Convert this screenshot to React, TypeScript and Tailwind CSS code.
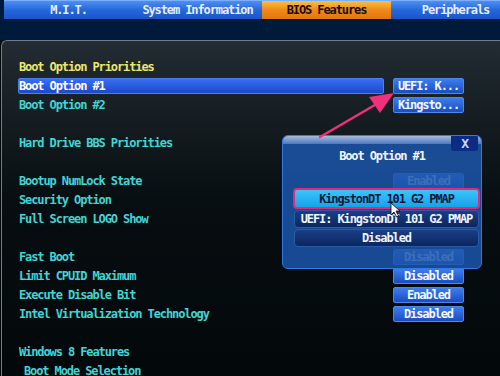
import React from "react";

type Row = {
  label?: string;
  value?: string;
  header?: boolean;
  selected?: boolean;
  indent?: boolean;
};

const rows: Row[] = [
  { label: "Boot Option Priorities", header: true },
  { label: "Boot Option #1", value: "UEFI: K...", selected: true },
  { label: "Boot Option #2", value: "Kingsto..." },
  {},
  { label: "Hard Drive BBS Priorities" },
  {},
  { label: "Bootup NumLock State", value: "Enabled" },
  { label: "Security Option" },
  { label: "Full Screen LOGO Show" },
  {},
  { label: "Fast Boot", value: "Disabled" },
  { label: "Limit CPUID Maximum", value: "Disabled" },
  { label: "Execute Disable Bit", value: "Enabled" },
  { label: "Intel Virtualization Technology", value: "Disabled" },
  {},
  { label: "Windows 8 Features" },
  { label: "Boot Mode Selection", indent: true },
];

const tabs = ["M.I.T.", "System Information", "BIOS Features", "Peripherals"];

const mono = "font-['DejaVu_Sans_Mono',monospace] font-bold text-[12px] tracking-[-1.1px] leading-none";

const ValueButton = ({ text }: { text: string }) => (
  <div className="ml-[9px] w-[71px] h-[16px] flex items-center justify-center rounded-[2px] border border-[#4c88ec] bg-gradient-to-b from-[#3f7ceb] to-[#1a4dc2] text-[#f4f8ff]">
    {text}
  </div>
);

const PopupOption = ({ text, active }: { text: string; active?: boolean }) =>
  active ? (
    <div className="ml-[10px] w-[187px] h-[21px] rounded-[4px] border-2 border-[#e4287a] bg-gradient-to-b from-[#3cc4fa] to-[#14a2ec] flex items-center justify-center text-[#0a1a3a]">
      {text}
    </div>
  ) : (
    <div className="ml-[11px] w-[185px] h-[18px] rounded-[4px] border border-[#2a5aa8] bg-gradient-to-b from-[#1a3f86] to-[#0b2660] flex items-center justify-center text-[#f0f4ff]">
      {text}
    </div>
  );

export default function App() {
  return (
    <div className={`relative w-[500px] h-[376px] overflow-hidden bg-[#03090b] ${mono}`}>
      {/* header */}
      <div className="h-[40px] bg-[#001a3c]">
        <div className="ml-[4px] flex h-[19px] border-t border-[#7ab0ff] bg-gradient-to-b from-[#4f8ef2] via-[#2368dc] to-[#1a55c8]">
          {tabs.map((t) =>
            t === "BIOS Features" ? (
              <div
                key={t}
                className="w-[129px] shrink-0 flex items-center justify-center bg-gradient-to-b from-[#f8c040] via-[#f08818] to-[#e47412] text-[#1a0c00]"
              >
                {t}
              </div>
            ) : (
              <div key={t} className="w-[129px] shrink-0 flex items-center justify-center text-[#e8eeff]">
                {t}
              </div>
            )
          )}
        </div>
      </div>

      {/* main panel */}
      <div className="ml-[1px] h-[336px] rounded-tl-[6px] border-l border-t border-[#6a7e8c] bg-gradient-to-b from-[#222c32] via-[#070d10] to-[#03090b] pt-[16px]">
        {rows.map((r, i) => (
          <div key={i} className="h-[19px] flex items-center">
            <div
              className={`ml-[16px] w-[366px] h-[16px] flex items-center ${
                r.selected
                  ? "bg-gradient-to-b from-[#3a6ef0] to-[#1c48cc] rounded-[2px] border border-[#4a80f4] text-white pl-0"
                  : r.header
                  ? "text-[#ece868] pl-[1px]"
                  : "text-[#3ed6d6] pl-[1px]"
              } ${r.indent ? "pl-[6px]" : ""}`}
            >
              {r.label}
            </div>
            {r.value && <ValueButton text={r.value} />}
          </div>
        ))}
      </div>

      {/* popup */}
      <div className="absolute left-[282px] top-[135px] w-[200px] h-[134px] rounded-[6px] border border-[#2f7ae4] bg-[#1c56aa]/85 flex flex-col overflow-hidden">
        <div className="h-[8px] bg-gradient-to-b from-[#a8bcd8] to-[#4a78c0]" />
        <div className="absolute right-[3px] top-0 w-[27px] h-[15px] rounded-b-[3px] bg-[#0c2c84] flex items-center justify-center text-[#c8d8ff] text-[13px]">
          X
        </div>
        <div className="h-[24px] flex items-center justify-center text-[#f4f6ff]">Boot Option #1</div>
        <div className="h-[20px]" />
        <div className="flex flex-col gap-[1px]">
          <PopupOption text="KingstonDT 101 G2 PMAP" active />
          <PopupOption text="UEFI: KingstonDT 101 G2 PMAP" />
          <PopupOption text="Disabled" />
        </div>
      </div>

      {/* annotation arrow + cursor */}
      <svg className="absolute left-0 top-0 pointer-events-none" width="500" height="376" viewBox="0 0 500 376">
        <line x1="320" y1="137" x2="380" y2="102" stroke="#f0307a" strokeWidth="2.5" strokeLinecap="round" />
        <polygon points="394,93 369,97 380,113" fill="#f0307a" />
        <polygon
          points="391,203 391,215 394,212 396.5,217 398.5,216 396,211 400,211"
          fill="#ffffff"
          stroke="#000000"
          strokeWidth="0.8"
        />
      </svg>
    </div>
  );
}
